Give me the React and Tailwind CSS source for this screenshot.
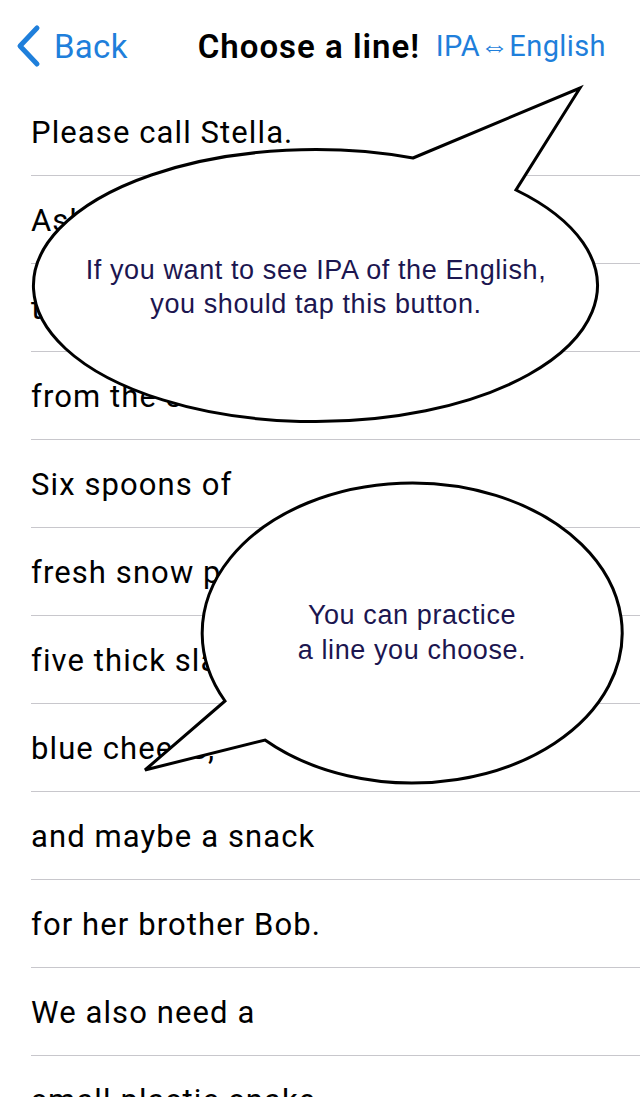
import React from 'react';

const lines = [
    'Please call Stella.',
    'Ask her to bring',
    'these things with her',
    'from the store:',
    'Six spoons of',
    'fresh snow peas,',
    'five thick slabs of',
    'blue cheese,',
    'and maybe a snack',
    'for her brother Bob.',
    'We also need a',
    'small plastic snake',
];

const sans = { fontFamily: 'Roboto, "Liberation Sans", sans-serif' };
const arial = { fontFamily: '"Liberation Sans", Arial, sans-serif' };

export default function App() {
    return (
        <div className="relative w-[640px] h-[1097px] overflow-hidden bg-white" style={sans}>
            {/* nav bar */}
            <div className="h-[88px] flex items-center pt-[4px] pl-[14px] pr-[34px]">
                <svg width="30" height="44" viewBox="0 0 30 44" className="shrink-0">
                    <path d="M23 4 L6 22 L23 40" fill="none" stroke="#1f7fdb" strokeWidth="5" strokeLinecap="round" strokeLinejoin="round" />
                </svg>
                <span className="ml-[10px] text-[33px] tracking-[0.3px] text-[#1f7fdb] leading-none">Back</span>
                <span className="ml-[70px] text-[33px] tracking-[1px] font-semibold text-black leading-none">Choose a line!</span>
                <span className="ml-auto text-[29px] tracking-[0.4px] text-[#1f7fdb] leading-none">IPA⇔English</span>
            </div>

            {/* list */}
            <div className="flex flex-col">
                {lines.map((t, i) => (
                    <div key={i} className="h-[88px] pl-[31px] flex flex-col">
                        <div className="flex-1 flex items-center pt-[4px] text-[31px] tracking-[1.1px] text-black">{t}</div>
                        <div className="h-px bg-[#c8c7cc]" />
                    </div>
                ))}
            </div>

            {/* speech bubbles */}
            <svg className="absolute inset-0 pointer-events-none" width="640" height="1097" viewBox="0 0 640 1097">
                <path
                    d="M413 158 L580 88 L516 190 A282 136 0 1 1 413 158 Z"
                    fill="white"
                    stroke="black"
                    strokeWidth="3"
                />
                <path
                    d="M225 701 L145 770 L265 740 A210 150 0 1 0 225 701 Z"
                    fill="white"
                    stroke="black"
                    strokeWidth="3"
                />
            </svg>

            <div
                className="absolute left-[56px] top-[253px] w-[520px] text-center text-[27px] tracking-[0.6px] leading-[34px] text-[#1c1650]"
                style={arial}
            >
                If you want to see IPA of the English,
                <br />
                you should tap this button.
            </div>
            <div
                className="absolute left-[262px] top-[598px] w-[300px] text-center text-[27px] tracking-[0.6px] leading-[35px] text-[#1c1650]"
                style={arial}
            >
                You can practice
                <br />
                a line you choose.
            </div>
        </div>
    );
}
